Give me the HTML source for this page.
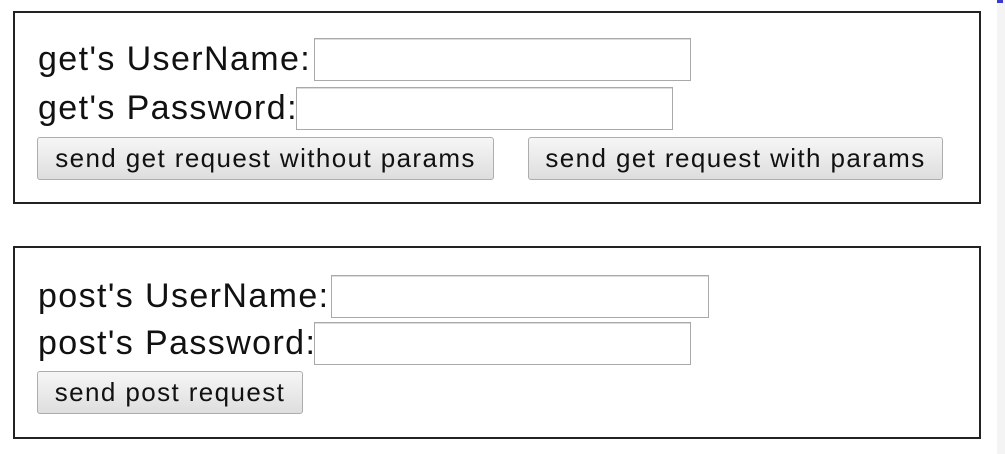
<!DOCTYPE html>
<html><head><meta charset="utf-8"><style>
html,body{margin:0;padding:0;width:1005px;height:454px;background:#fff;overflow:hidden;position:relative;font-family:"Liberation Sans",sans-serif;color:#111}
.box{position:absolute;left:13px;width:964px;height:189px;border:2px solid #222}
.lbl{position:absolute;font-size:34px;letter-spacing:1.4px;line-height:43px;height:43px;white-space:nowrap}
.inp{position:absolute;height:41px;border:1px solid #a9a9a9;box-shadow:inset 0 1px 0 #ddd;background:#fff}
.btn{position:absolute;height:41px;border:1px solid #adadad;border-radius:3px;background:linear-gradient(#f6f6f6,#dedede);font-size:26px;letter-spacing:1.4px;line-height:41px;text-align:center;white-space:nowrap;color:#111}
.sb{position:absolute;left:997px;top:0;width:8px;height:454px;background:#f4f4f4}
</style></head><body>
<div class="box" style="top:11px"></div>
<div class="box" style="top:246px"></div>
<div class="lbl" style="left:38px;top:38px">get's UserName:</div>
<div class="inp" style="left:314px;top:38px;width:375px"></div>
<div class="lbl" style="left:38px;top:87px">get's Password:</div>
<div class="inp" style="left:296px;top:87px;width:375px"></div>
<div class="btn" style="left:37px;top:137px;width:455px">send get request without params</div>
<div class="btn" style="left:528px;top:137px;width:413px">send get request with params</div>
<div class="lbl" style="left:38px;top:275px">post's UserName:</div>
<div class="inp" style="left:331px;top:275px;width:376px"></div>
<div class="lbl" style="left:38px;top:322px">post's Password:</div>
<div class="inp" style="left:314px;top:322px;width:375px"></div>
<div class="btn" style="left:37px;top:371px;width:264px">send post request</div>
<div class="sb"></div>
<div style="position:absolute;left:997px;top:0;width:6px;height:3px;background:#3a3ad0"></div>
</body></html>
